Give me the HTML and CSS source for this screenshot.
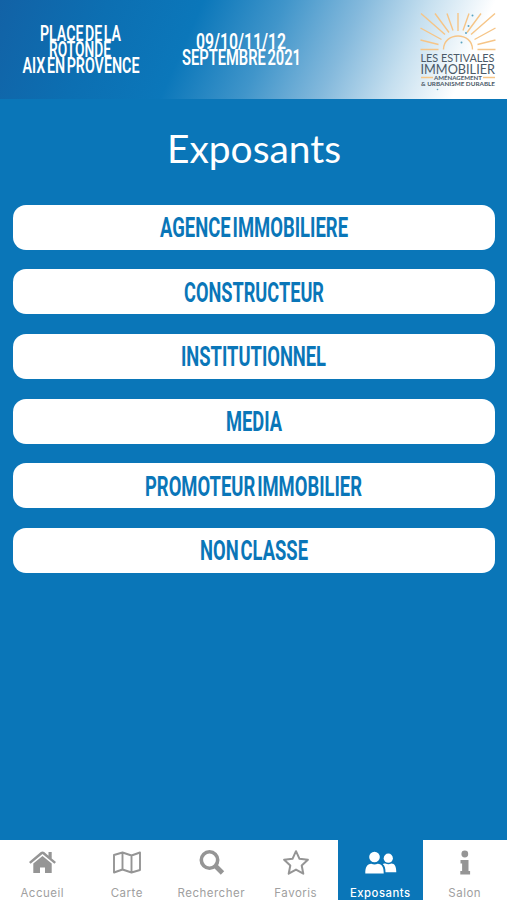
FILE: index.html
```html
<!DOCTYPE html>
<html lang="fr">
<head>
  <meta charset="utf-8">
  <title>Exposants</title>
  <link rel="stylesheet" href="styles.css">
</head>
<body>

<header class="banner">
  <svg class="banner-text" width="410" height="98">
    <text x="40" y="40.700" textLength="81" lengthAdjust="spacingAndGlyphs">PLACE DE LA</text>
    <text x="49" y="57" textLength="62" lengthAdjust="spacingAndGlyphs">ROTONDE</text>
    <text x="22.500" y="73.300" textLength="117" lengthAdjust="spacingAndGlyphs">AIX EN PROVENCE</text>
    <text x="196" y="49" textLength="90" lengthAdjust="spacingAndGlyphs">09/10/11/12</text>
    <text x="182" y="65.200" textLength="119" lengthAdjust="spacingAndGlyphs">SEPTEMBRE 2021</text>
  </svg>
  <svg class="logo" width="97" height="98" viewBox="410 0 97 98">
    <g class="rays">
      <path d="M420.500 49.500h18M477.500 49.500h18M420.500 40l18 4.500M495.500 40l-18 4.500M420.500 28l21 11.500M495.500 28l-21 11.500M421 13.500l24 21M495 13.500l-24 21M435 13.500l14 19M481 13.500l-14 19M447 13.500l6 17M469 13.500l-6 17M458 13v18"/>
      <path d="M443.500 49.500c0-18 29-18 29 0"/>
      <path d="M421 77.500h12M483 77.500h12"/>
    </g>
    <g class="dots">
      <circle cx="472.500" cy="15.500" r="1"/><circle cx="468.500" cy="26" r="1"/>
      <circle cx="466" cy="33" r="1"/><circle cx="461.500" cy="42.500" r="1"/>
      <circle cx="437.500" cy="89.500" r=".8"/>
    </g>
    <text class="logo-md" x="420.500" y="61.500" textLength="74" lengthAdjust="spacingAndGlyphs">LES ESTIVALES</text>
    <text class="logo-lg" x="420.500" y="73.500" textLength="74.500" lengthAdjust="spacingAndGlyphs">IMMOBILIER</text>
    <text class="logo-sm" x="434" y="80" textLength="48" lengthAdjust="spacingAndGlyphs">AMÉNAGEMENT</text>
    <text class="logo-sm" x="421" y="86.300" textLength="74" lengthAdjust="spacingAndGlyphs">&amp; URBANISME DURABLE</text>
  </svg>
</header>

<main class="content">
  <h1>Exposants</h1>
  <div class="categories">
    <button><svg width="188" height="40"><text y="29.700" textLength="188" lengthAdjust="spacingAndGlyphs">AGENCE IMMOBILIERE</text></svg></button>
    <button><svg width="141" height="40"><text y="29.700" textLength="140" lengthAdjust="spacingAndGlyphs">CONSTRUCTEUR</text></svg></button>
    <button><svg width="146" height="40"><text y="29.700" textLength="145" lengthAdjust="spacingAndGlyphs">INSTITUTIONNEL</text></svg></button>
    <button><svg width="57" height="40"><text y="29.700" textLength="56" lengthAdjust="spacingAndGlyphs">MEDIA</text></svg></button>
    <button><svg width="218" height="40"><text y="29.700" textLength="217" lengthAdjust="spacingAndGlyphs">PROMOTEUR IMMOBILIER</text></svg></button>
    <button><svg width="108" height="40"><text y="29.700" textLength="108" lengthAdjust="spacingAndGlyphs">NON CLASSE</text></svg></button>
  </div>
</main>

<nav class="tabs">
  <a class="tab">
    <svg width="30" height="30" viewBox="0 0 30 30"><path fill="currentColor" d="M15.500 3.500c.7 0 1.200.200 1.700.600l4.300 3.600V4h3.200v6.400l4.300 3.500-1.600 1.900-11.900-9.700-11.900 9.700L2 13.900 13.800 4.100c.5-.4 1-.600 1.700-.600zM15.500 8l9.200 7.500V25h-6.700v-5.500h-5V25H6.300v-9.500z"/></svg>
    <span>Accueil</span>
  </a>
  <a class="tab">
    <svg width="30" height="30" viewBox="0 0 30 30"><path fill="none" stroke="currentColor" stroke-width="1.900" stroke-linejoin="round" d="M2 7l8.500-2.500 9 3L28 4.500V22l-8.500 2.500-9-3L2 24.500zM10.500 4.500v17M19.500 7.500v17"/></svg>
    <span>Carte</span>
  </a>
  <a class="tab">
    <svg width="30" height="30" viewBox="0 0 30 30"><g fill="none" stroke="currentColor"><circle cx="13.500" cy="12" r="8.200" stroke-width="3.600"/><path stroke-width="4.800" d="M19 17.500l7.500 7.500"/></g></svg>
    <span>Rechercher</span>
  </a>
  <a class="tab">
    <svg width="30" height="30" viewBox="0 0 30 30"><path fill="none" stroke="currentColor" stroke-width="2" stroke-linejoin="round" d="M15 3.200l3.500 7.600 8.400 1-6.200 5.700 1.600 8.200-7.300-4.100-7.300 4.100 1.600-8.200-6.200-5.700 8.400-1z"/></svg>
    <span>Favoris</span>
  </a>
  <a class="tab active">
    <svg width="34" height="30" viewBox="0 0 34 30"><g fill="currentColor"><circle cx="11.500" cy="9" r="5.300"/><path d="M2.300 25.500c-.2-6 1.700-9.800 6-9.800 2.100 1 4.300 1 6.400 0 4.300 0 6.200 3.800 6 9.800z"/><circle cx="25.300" cy="10.200" r="4.600"/><path d="M22.500 24.200c0-4-.8-6.500-2.600-8 .7-.6 1.500-.6 2.500-.6 2 .8 4 .8 6 0 3.400.1 4.900 3 4.900 8.600z"/></g></svg>
    <span>Exposants</span>
  </a>
  <a class="tab">
    <svg width="30" height="30" viewBox="0 0 30 30"><g fill="currentColor"><circle cx="14.800" cy="6" r="3.400"/><path d="M10.500 12h8v11h1.600v3.500h-9.800V23h1.800v-7.500h-1.600z"/></g></svg>
    <span>Salon</span>
  </a>
</nav>

</body>
</html>
```

FILE: styles.css
```css
* {
  box-sizing: border-box;
}

body {
  margin: 0;
  height: 900px;
  display: flex;
  flex-direction: column;
  background-color: #0a76b8;
  font-family: Inter, sans-serif;
  overflow: hidden;
}

svg {
  overflow: visible;
}

.banner {
  height: 98.5px;
  flex: none;
  display: flex;
  background: linear-gradient(114deg, #1262a6 0%, #0c6fb2 20%, #0b77ba 37%, #4095ca 52%, #84b9dc 66%, #c5dfef 78%, #fff 90%);
}

.banner-text {
  fill: #fff;
  font: 600 21.5px Roboto, sans-serif;
  word-spacing: -3px;
}

.rays {
  fill: none;
  stroke: #f6c587;
  stroke-width: 1.4;
}

.dots {
  fill: #5ba3bf;
}

.logo text {
  fill: #4b5a68;
  font-family: Lato, sans-serif;
}

.logo .logo-md {
  font-size: 11px;
}

.logo .logo-lg {
  font-size: 14px;
}

.logo .logo-sm {
  font-size: 5.8px;
  font-weight: bold;
}

.content {
  flex: 1;
  padding: 0 12px 0 13px;
}

h1 {
  margin: 0;
  padding-top: 25px;
  height: 106px;
  text-align: center;
  color: #fff;
  font: 400 38.9px/48px Lato, sans-serif;
}

.categories {
  display: flex;
  flex-direction: column;
  gap: 19.7px;
}

.categories button {
  display: flex;
  justify-content: center;
  align-items: center;
  width: 100%;
  height: 45px;
  padding: 0;
  border: none;
  border-radius: 13px;
  background-color: #fff;
}

.categories text {
  fill: #0a76b8;
  font: 700 28px Roboto, sans-serif;
  word-spacing: -4px;
}

.tabs {
  flex: none;
  height: 60px;
  display: grid;
  grid-template-columns: repeat(6, 1fr);
  background-color: #fff;
}

.tab {
  display: flex;
  flex-direction: column;
  align-items: center;
  padding-top: 8px;
  color: #959595;
}

.tab span {
  margin-top: 8px;
  font-size: 11.5px;
  line-height: 14px;
  letter-spacing: 0.5px;
  color: #a0a0a0;
}

.tab.active,
.tab.active span {
  background-color: #0a76b8;
  color: #fff;
}

.tab.active span {
  font-weight: 500;
  font-size: 11.3px;
}
```
